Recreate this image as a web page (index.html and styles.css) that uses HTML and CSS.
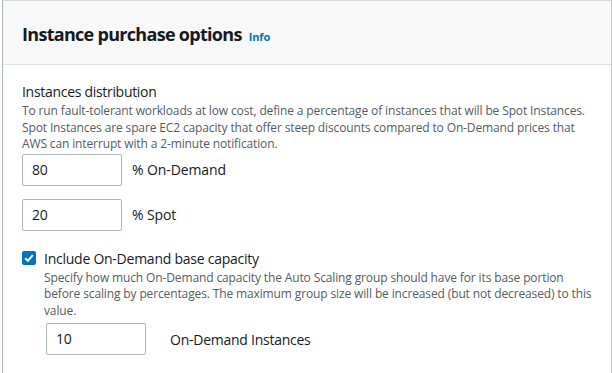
FILE: index.html
```html
<!DOCTYPE html>
<html>
<head>
<meta charset="utf-8">
<link rel="stylesheet" href="styles.css">
</head>
<body>
<div class="panel">
  <div class="header">
    <h2 class="title">Instance purchase options</h2>
    <a class="info">Info</a>
  </div>
  <div class="content">
    <div class="field-label">Instances distribution</div>
    <div class="desc">To run fault-tolerant workloads at low cost, define a percentage of instances that will be Spot Instances. Spot Instances are spare EC2 capacity that offer steep discounts compared to On-Demand prices that AWS can interrupt with a 2-minute notification.</div>
    <div class="row first">
      <div class="input">80</div>
      <span class="unit">% On-Demand</span>
    </div>
    <div class="row">
      <div class="input">20</div>
      <span class="unit">% Spot</span>
    </div>
    <div class="check-row">
      <span class="checkbox">
        <svg width="14" height="14" viewBox="0 0 14 14"><path d="M3.2 7.2 L5.9 9.8 L10.8 4.2" fill="none" stroke="#fff" stroke-width="2"/></svg>
      </span>
      <span class="check-label">Include On-Demand base capacity</span>
    </div>
    <div class="sub">
      <div class="desc">Specify how much On-Demand capacity the Auto Scaling group should have for its base portion before scaling by percentages. The maximum group size will be increased (but not decreased) to this value.</div>
      <div class="row base">
        <div class="input">10</div>
        <span class="unit wide">On-Demand Instances</span>
      </div>
    </div>
  </div>
</div>
</body>
</html>
```
FILE: styles.css
```css
* { box-sizing: border-box; }
html, body { margin: 0; padding: 0; background: #fff; }
body {
  font-family: "Open Sans", "Noto Sans", sans-serif;
  color: #16191f;
  padding-left: 2px;
  height: 373px;
  overflow: hidden;
}
.panel {
  width: 610px;
  height: 373px;
  border: 1px solid #d5dbdb;
  border-left-color: #aab7b8;
  border-right-color: #c6c6c6;
  border-bottom: none;
}
.header {
  height: 64px;
  background: #f8f8f8;
  border-bottom: 1px solid #e0e3e3;
  display: flex;
  align-items: baseline;
  padding: 20px 19px 0;
}
.title {
  margin: 0;
  font-size: 18px;
  font-weight: 700;
  letter-spacing: -0.7px;
  line-height: 26px;
}
.info {
  margin-left: 7px;
  font-size: 11px;
  font-weight: 700;
  letter-spacing: -0.1px;
  color: #0073bb;
}
.content {
  padding: 17px 19px 0;
}
.field-label {
  font-size: 14px;
  line-height: 20px;
  letter-spacing: -0.3px;
}
.desc {
  font-size: 12px;
  line-height: 16.5px;
  color: #545b64;
  margin-top: 1px;
  letter-spacing: -0.13px;
}
.row {
  display: flex;
  align-items: center;
  margin-top: 13px;
}
.row.first { margin-top: 1px; }
.input {
  width: 100px;
  height: 32px;
  border: 1px solid #aab7b8;
  border-radius: 2px;
  font-size: 14px;
  line-height: 30px;
  padding-left: 9px;
  letter-spacing: -0.2px;
}
.unit {
  margin-left: 10px;
  font-size: 14px;
  letter-spacing: -0.1px;
}
.unit.wide { margin-left: 24px; letter-spacing: -0.25px; }
.check-row {
  display: flex;
  align-items: center;
  margin-top: 18px;
}
.checkbox {
  width: 14px;
  height: 14px;
  border-radius: 2px;
  background: #0073bb;
  display: flex;
}
.check-label {
  margin-left: 8px;
  font-size: 14px;
  letter-spacing: -0.25px;
}
.sub {
  padding-left: 22px;
}
.sub .desc { margin-top: 2px; }
.row.base { margin-top: 4px; margin-left: 2px; }
```
